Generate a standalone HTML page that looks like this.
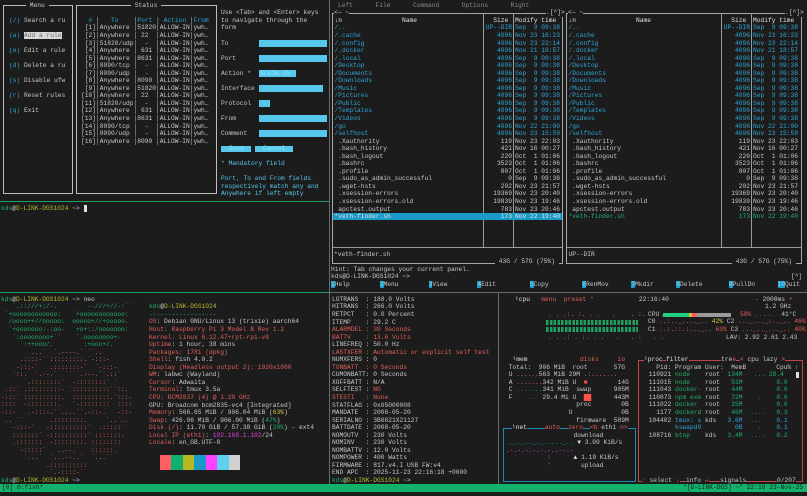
<!DOCTYPE html>
<html><head><meta charset="utf-8"><style>
html,body{margin:0;padding:0;background:#1c1c1c;width:807px;height:496px;overflow:hidden;position:relative}
pre,.a{position:absolute;margin:0;font:6.25px/7.54px "Liberation Mono","DejaVu Sans Mono",monospace;color:#c8c8c8;white-space:pre}
.c{color:#2fa6d6}.cy{color:#55c8ec}.g{color:#22b06a}.y{color:#b8b830}.r{color:#e0605a}.m{color:#e040e0}.w{color:#e0e0e0}.t{color:#1a8ab0}.gy{color:#8a8a8a}.yl{color:#d8c840}
.box{position:absolute;border:1px solid #bdbdbd}
.ln{position:absolute;background:#9a9a9a}
.in{position:absolute;background:#55c8ec;height:6.5px}
.bg{background:#1c1c1c}
</style></head><body>

<!-- Pane A: ufw -->
<div class="box" style="left:3px;top:5px;width:68px;height:187px"></div>
<div class="box" style="left:76px;top:5px;width:139px;height:187px"></div>
<pre class="bg" style="left:26px;top:1.8px"> Menu </pre>
<pre class="bg" style="left:131px;top:1.8px"> Status </pre>
<pre style="left:9px;top:16.88px"><span class="c">(/)</span> Search a ru

<span class="c">(a)</span> <span style="background:#d8d8d8;color:#707070">Add a rule</span>

<span class="c">(e)</span> Edit a rule

<span class="c">(d)</span> Delete a ru

<span class="c">(s)</span> Disable ufw

<span class="c">(r)</span> Reset rules

<span class="c">(q)</span> Exit</pre>
<pre style="left:81px;top:16.88px">  <span class="c">#</span> │   <span class="c">To</span>    │<span class="c">Port</span> │ <span class="c">Action</span> │<span class="c">From</span>
 [1]│Anywhere │51820│ALLOW-IN│ywh…
 [2]│Anywhere │ 22  │ALLOW-IN│ywh…
 [3]│51820/udp│  -  │ALLOW-IN│ywh…
 [4]│Anywhere │ 631 │ALLOW-IN│ywh…
 [5]│Anywhere │8631 │ALLOW-IN│ywh…
 [6]│8090/tcp │  -  │ALLOW-IN│ywh…
 [7]│8090/udp │  -  │ALLOW-IN│ywh…
 [8]│Anywhere │8090 │ALLOW-IN│ywh…
 [9]│Anywhere │51820│ALLOW-IN│ywh…
[10]│Anywhere │ 22  │ALLOW-IN│ywh…
[11]│51820/udp│  -  │ALLOW-IN│ywh…
[12]│Anywhere │ 631 │ALLOW-IN│ywh…
[13]│Anywhere │8631 │ALLOW-IN│ywh…
[14]│8090/tcp │  -  │ALLOW-IN│ywh…
[15]│8090/udp │  -  │ALLOW-IN│ywh…
[16]│Anywhere │8090 │ALLOW-IN│ywh…</pre>
<pre style="left:221px;top:9.34px">Use &lt;Tab&gt; and &lt;Enter&gt; keys
to navigate through the
form

To

Port

Action *

Interface

Protocol

From

Comment



<span class="cy">* Mandatory field</span>

<span class="cy">Port, To and From fields
respectively match any and
Anywhere if left empty</span></pre>
<div class="in" style="left:259px;top:40px;width:68px"></div>
<div class="in" style="left:259px;top:55px;width:68px"></div>
<div class="in" style="left:259px;top:70px;width:37px"></div>
<pre style="left:260px;top:69.66px;color:#90e4fa">ALLOW IN</pre>
<div class="in" style="left:259px;top:85px;width:64px"></div>
<div class="in" style="left:259px;top:100px;width:11px"></div>
<div class="in" style="left:259px;top:115px;width:68px"></div>
<div class="in" style="left:259px;top:130px;width:68px"></div>
<div class="in" style="left:221px;top:145.5px;width:30px"></div>
<div class="in" style="left:255px;top:145.5px;width:38px"></div>
<pre style="left:229px;top:145.06px;color:#90e4fa">Save</pre>
<pre style="left:263px;top:145.06px;color:#90e4fa">Cancel</pre>

<div style="position:absolute;left:0;top:201px;width:329px;height:1px;background:#20a060"></div>
<pre style="left:1px;top:205.38px"><span class="g">kds</span>@<span class="y">D-LINK-DGS1024</span> ~&gt; <span style="background:#e0e0e0"> </span></pre>

<!-- tmux separators -->
<div style="position:absolute;left:329px;top:0;width:1px;height:484px;background:#6a6a6a"></div>
<div style="position:absolute;left:0;top:292px;width:329px;height:1px;background:#20a060"></div>
<div style="position:absolute;left:330px;top:292px;width:477px;height:1px;background:#6a6a6a"></div>
<div style="position:absolute;left:498px;top:292px;width:1px;height:192px;background:#6a6a6a"></div>

<!-- Pane B: mc -->
<pre class="gy" style="left:338px;top:1.8px">Left      File      Command      Options      Right</pre>
<div class="box" style="left:332px;top:12.5px;width:229px;height:249px;border-color:#a8a8a8"></div>
<div class="box" style="left:566px;top:12.5px;width:234px;height:249px;border-color:#a8a8a8"></div>
<div class="ln" style="left:483px;top:13px;width:1px;height:234px"></div>
<div class="ln" style="left:513px;top:13px;width:1px;height:234px"></div>
<div class="ln" style="left:721px;top:13px;width:1px;height:234px"></div>
<div class="ln" style="left:751px;top:13px;width:1px;height:234px"></div>
<div class="ln" style="left:333px;top:246.5px;width:229px;height:1px"></div>
<div class="ln" style="left:567px;top:246.5px;width:234px;height:1px"></div>
<pre class="bg" style="left:334px;top:9.34px">&lt;─ ~</pre>
<pre class="bg" style="left:546px;top:9.34px">.[^]&gt;</pre>
<pre class="bg" style="left:568px;top:9.34px">&lt;─ ~</pre>
<pre class="bg" style="left:785px;top:9.34px">.[^]&gt;</pre>
<div style="position:absolute;left:333px;top:212.92px;width:229px;height:7.54px;background:#1a9ac8"></div>

<pre style="left:334.5px;top:16.88px"><span class="w">↓n                Name</span>
<span class="c">/..
/.cache
/.config
/.docker
/.local
/Desktop
/Documents
/Downloads
/Music
/Pictures
/Public
/Templates
/Videos
/go
/selfhost</span>
 .Xauthority
 .bash_history
 .bash_logout
 .bashrc
 .profile
 .sudo_as_admin_successful
 .wget-hsts
 .xsession-errors
 .xsession-errors.old
 apctest.output
<span class="w">*veth-finder.sh</span></pre>
<pre style="left:484px;width:28px;text-align:right;top:16.88px"><span class="w">Size </span>
<span class="c">UP--DIR
4096
4096
4096
4096
4096
4096
4096
4096
4096
4096
4096
4096
4096
4096</span>
119
421
220
3523
807
0
202
19369
19839
783
<span class="w">173</span></pre>
<pre style="left:515px;top:16.88px"><span class="w">Modify time</span>
<span class="c">Sep  9 09:38
Nov 23 16:23
Nov 23 22:14
Nov 21 18:57
Sep  9 09:38
Sep  9 09:38
Sep  9 09:38
Sep  9 09:38
Sep  9 09:38
Sep  9 09:38
Sep  9 09:38
Sep  9 09:38
Sep  9 09:38
Nov 22 21:00
Nov 23 15:59</span>
Nov 23 22:03
Nov 16 00:27
Oct  1 01:06
Oct  1 01:06
Oct  1 01:06
Sep  9 09:38
Nov 23 21:57
Nov 23 20:40
Nov 23 19:46
Nov 23 20:46
<span class="w">Nov 22 19:40</span></pre>

<pre style="left:568.5px;top:16.88px"><span class="w">↓n                Name</span>
<span class="c">/..
/.cache
/.config
/.docker
/.local
/Desktop
/Documents
/Downloads
/Music
/Pictures
/Public
/Templates
/Videos
/go
/selfhost</span>
 .Xauthority
 .bash_history
 .bash_logout
 .bashrc
 .profile
 .sudo_as_admin_successful
 .wget-hsts
 .xsession-errors
 .xsession-errors.old
 apctest.output
<span class="g">*veth-finder.sh</span></pre>
<pre style="left:722px;width:28px;text-align:right;top:16.88px"><span class="w">Size </span>
<span class="c">UP--DIR
4096
4096
4096
4096
4096
4096
4096
4096
4096
4096
4096
4096
4096
4096</span>
119
421
220
3523
807
0
202
19369
19839
783
<span class="g">173</span></pre>
<pre style="left:753px;top:16.88px"><span class="w">Modify time</span>
<span class="c">Sep  9 09:38
Nov 23 16:23
Nov 23 22:14
Nov 21 18:57
Sep  9 09:38
Sep  9 09:38
Sep  9 09:38
Sep  9 09:38
Sep  9 09:38
Sep  9 09:38
Sep  9 09:38
Sep  9 09:38
Sep  9 09:38
Nov 22 21:00
Nov 23 15:59</span>
Nov 23 22:03
Nov 16 00:27
Oct  1 01:06
Oct  1 01:06
Oct  1 01:06
Sep  9 09:38
Nov 23 21:57
Nov 23 20:40
Nov 23 19:46
Nov 23 20:46
<span class="g">Nov 22 19:40</span></pre>
<pre style="left:334px;top:250.62px">*veth-finder.sh</pre>
<pre style="left:568.5px;top:250.62px">UP--DIR</pre>
<pre class="bg" style="left:495px;top:258.16px"> 43G / 57G (75%) </pre>
<pre class="bg" style="left:732px;top:258.16px"> 43G / 57G (75%) </pre>
<pre style="left:331px;top:265.7px">Hint: Tab changes your current panel.
kds@D-LINK-DGS1024 ~&gt;</pre>
<pre style="left:791px;top:273.24px">[^]</pre>
<pre style="left:331px;top:280.78px"><span style="background:#1a9ac8;color:#9ad8f0">1</span>Help        <span style="background:#1a9ac8;color:#9ad8f0">2</span>Menu        <span style="background:#1a9ac8;color:#9ad8f0">3</span>View        <span style="background:#1a9ac8;color:#9ad8f0">4</span>Edit         <span style="background:#1a9ac8;color:#9ad8f0">5</span>Copy         <span style="background:#1a9ac8;color:#9ad8f0">6</span>RenMov      <span style="background:#1a9ac8;color:#9ad8f0">7</span>Mkdir      <span style="background:#1a9ac8;color:#9ad8f0">8</span>Delete       <span style="background:#1a9ac8;color:#9ad8f0">9</span>PullDn      <span style="background:#1a9ac8;color:#9ad8f0">10</span>Quit</pre>

<!-- Pane C: neofetch -->
<pre style="left:1px;top:295.86px"><span class="g">kds</span>@<span class="y">D-LINK-DGS1024</span> ~&gt; neo</pre>
<pre class="g" style="left:1px;top:303.4px">   `.::///+:/-.        --///+//-:``
 `+oooooooooooo:   `+oooooooooooo:
  /oooo++//ooooo:  ooooo+//+ooooo.
  `+ooooooo:-:oo-   +o+::/ooooooo:
   `:oooooooo+``    `.oooooooo+-
     `:++ooo/.        :+ooo+/.`</pre>
<pre class="r" style="left:1px;top:348.64px">        ...`  `.----.` ``..
     .::::-``:::::::::.`-:::-
    -:::-`   .:::::::-`  `-:::-
   `::.  `.--.`  `` `.---.``.::`
       .::::::::`  -::::::::` `
 .::` .:::::::::- `::::::::::``::.
-:::` ::::::::::.  ::::::::::.`:::-
::::  -::::::::.   `-::::::::  ::::
-::-   .-:::-.``....``.-::-.   -::-
 .. ``       .::::::::.     `..`..
   -:::-`   -::::::::::`  .:::::`
   :::::::` -::::::::::` :::::::.
   .:::::::  -::::::::. ::::::::
    `-:::::`   ..--.`   ::::::.
      `...`  `...--..`  `...`
            .::::::::::
             `.-::::-`</pre>
<pre style="left:149px;top:303.4px"><span class="g">kds</span>@<span class="y">D-LINK-DGS1024</span>
<span class="g">------------------</span>
<span class="r">OS</span>: Debian GNU/Linux 13 (trixie) aarch64
<span class="r">Host: Raspberry Pi 3 Model B Rev 1.2</span>
<span class="r">Kernel: Linux 6.12.47+rpt-rpi-v8</span>
<span class="r">Uptime</span>: 1 hour, 38 mins
<span class="r">Packages: 1781 (dpkg)</span>
<span class="r">Shell</span>: fish 4.0.2
<span class="r">Display (Headless output 2): 1920x1080</span>
<span class="r">WM</span>: labwc (Wayland)
<span class="r">Cursor</span>: Adwaita
<span class="r">Terminal</span>: tmux 3.5a
<span class="r">CPU: BCM2837 (4) @ 1.20 GHz</span>
GPU: Broadcom bcm2835-vc4 [Integrated]
<span class="r">Memory</span>: 566.65 MiB / 906.04 MiB (<span class="yl">63%</span>)
<span class="r">Swap</span>: 426.06 MiB / 906.00 MiB (<span class="g">47%</span>)
<span class="r">Disk (/)</span>: 11.70 GiB / 57.38 GiB (<span class="g">20%</span>) - ext4
<span class="r">Local IP (eth1)</span>: <span class="m">192.168.1.102</span>/24
<span class="r">Locale</span>: en_GB.UTF-8</pre>
<div style="position:absolute;left:160px;top:455px;height:15px;width:80px;display:flex">
<div style="flex:1;background:#ff5f5f"></div><div style="flex:1;background:#10b070"></div><div style="flex:1;background:#b8b820"></div><div style="flex:1;background:#1a9ac8"></div><div style="flex:1;background:#ff40ff"></div><div style="flex:1;background:#5fd0f0"></div><div style="flex:1;background:#d0d0d0"></div></div>
<pre style="left:1px;top:476.82px"><span class="g">kds</span>@<span class="y">D-LINK-DGS1024</span> ~&gt;</pre>

<!-- Pane D: apcupsd -->
<pre style="left:332px;top:295.86px">LOTRANS  : 188.0 Volts
HITRANS  : 266.0 Volts
RETPCT   : 0.0 Percent
ITEMP    : 29.2 C
<span class="r">ALARMDEL : 30 Seconds
BATTV    : 13.6 Volts</span>
LINEFREQ : 50.0 Hz
<span class="r">LASTXFER : Automatic or explicit self test</span>
NUMXFERS : 0
<span class="r">TONBATT  : 0 Seconds</span>
CUMONBATT: 0 Seconds
XOFFBATT : N/A
SELFTEST : <span class="r">NO</span>
<span class="r">STESTI   : None</span>
STATFLAG : 0x05000008
MANDATE  : 2008-05-20
SERIALNO : 3B0821X21127
BATTDATE : 2008-05-20
NOMOUTV  : 230 Volts
NOMINV   : 230 Volts
NOMBATTV : 12.0 Volts
NOMPOWER : 400 Watts
FIRMWARE : 817.v4.I USB FW:v4
END APC  : 2025-11-23 22:16:18 +0000
<span class="g">kds</span>@<span class="y">D-LINK-DGS1024</span> ~&gt;</pre>

<!-- Pane E: btop -->
<pre style="left:515px;top:295.86px"><span class="w">¹cpu</span>   <span class="r">menu</span>  <span class="r">preset *</span>            22:16:40</pre>
<pre style="left:755px;top:295.86px"><span class="r">-</span> 2000ms <span class="r">+</span></pre>
<pre style="left:765px;top:303.4px">1.2 GHz</pre>
<pre class="r" style="left:548px;top:310.94px">. . .:. :. . .   .    . :.  . .</pre>
<div style="position:absolute;left:546px;top:320px;width:92px;height:12px;background:repeating-linear-gradient(90deg,#1ea060 0 2.5px,transparent 2.5px 3.75px);-webkit-mask:linear-gradient(#000 0 5px,transparent 5px 7px,#000 7px)"></div>
<pre class="r" style="left:548px;top:333.56px">. . .: . :. . .   .   . :   . .</pre>
<pre style="left:648px;top:310.94px">CPU</pre>
<div style="position:absolute;left:663px;top:313px;width:68px;height:4px;background:linear-gradient(90deg,#20d080 0 26px,#d8c030 26px 29px,#f06060 29px 34px,#9a9a9a 34px)"></div>
<pre style="left:740px;top:310.94px"><span class="r">50%</span> <span class="t">.....</span>  41°C</pre>
<pre style="left:648px;top:318.48px">C0 <span class="r">..:.._...._..</span> <span class="yl">42%</span> C2 <span class="r">..._..._:.._..</span> <span class="r">46%</span>
C1 <span class="r">..:.::.:..._..</span> <span class="r">63%</span> C3 <span class="r">..._.._..._..</span> <span class="r">40%</span></pre>
<pre style="left:726px;top:333.56px">LAV: 2.92 2.61 2.43</pre>

<pre style="left:501.25px;top:356.18px">   <span class="w">¹mem</span>              <span class="r">disks</span>     <span class="r">io</span>
  Total:  906 MiB  root       57G
  U <span class="r">......</span>563 MiB 29M <span class="r">.:.......</span>
  A <span class="r">.......</span>342 MiB U  <span style="color:#ff5050">■</span>        14G
  C <span class="t">.......</span>341 MiB  swap      905M
  F    <span class="t">..</span>  29.4 Mi U  <span style="color:#ff5050">██</span>      443M
                    proc        0B
                  U             0B
                    firmware  589M</pre>

<div class="box" style="left:503px;top:427.5px;width:131px;height:52px;border-color:#1a8ab0"></div>
<pre class="bg" style="left:512px;top:424.04px"><span class="w">¹net</span></pre>
<pre class="bg" style="left:545px;top:424.04px"><span class="r">auto</span></pre>
<pre class="bg" style="left:568px;top:424.04px"><span class="r">zero</span></pre>
<pre class="bg" style="left:590px;top:424.04px"><span class="r">&lt;b</span> eth1 <span class="r">n&gt;</span></pre>
<pre style="left:506px;top:431.58px">                  download
<span class="t">._.._.._._....._..</span> <span class="w">▼</span> 3.09 KiB/s
<span class="m">.-.-.-.-.-.-..--.-</span>
           <span class="m">:</span>      <span class="w">▲</span> 1.19 KiB/s
           <span class="m">'</span>        upload</pre>

<div class="box" style="left:638px;top:359.9px;width:163px;height:120px;border-color:#c04545"></div>
<pre class="bg" style="left:644px;top:356.18px"><span class="w">¹proc</span></pre>
<pre class="bg" style="left:666px;top:356.18px"><span class="w">filter</span></pre>
<pre class="bg" style="left:721px;top:356.18px">tre<span class="r">e</span></pre>
<pre class="bg" style="left:740px;top:356.18px"><span class="r">&lt;</span> cpu lazy <span class="r">&gt;</span></pre>
<pre style="left:641.25px;top:363.72px">    Pid: Program User:  MemB        Cpu% ↑
  110921 <span class="g">node</span>    root  <span class="g">134M</span>   <span class="t">...</span> <span class="g">28.4</span>
  111015 <span class="g">node</span>    root   <span class="g">51M</span>         <span class="g">0.0</span>
  111043 <span class="g">docker-</span> root   <span class="g">44M</span>         <span class="g">0.0</span>
  110873 <span class="g">npm exe</span> root   <span class="g">72M</span>    <span class="t">.</span>    <span class="g">0.0</span>
  111022 <span class="g">docker</span>  root   <span class="g">25M</span>         <span class="g">0.0</span>
    1177 <span class="g">dockerd</span> root   <span class="g">46M</span>  <span class="t">....</span>   <span class="g">0.3</span>
  104402 <span class="c">tmux: s</span> kds   <span class="c">3.6M</span>  <span class="t">...</span>    <span class="c">0.1</span>
         <span class="c">kswapd0</span>         <span class="c">0B</span>    <span class="t">.</span>    <span class="c">0.1</span>
  108716 <span class="g">btop</span>    kds   <span class="g">3.4M</span>  <span class="t">....</span>   <span class="g">0.2</span></pre>
<div style="position:absolute;left:796px;top:372px;width:3px;height:6px;background:#e0e0e0"></div>
<pre class="bg" style="left:642px;top:476.82px"><span class="r">↑</span> select <span class="r">↓</span></pre>
<pre class="bg" style="left:686px;top:476.82px">info <span class="r">↵</span></pre>
<pre class="bg" style="left:720px;top:476.82px">signals</pre>
<pre class="bg" style="left:777px;top:476.82px">0/207</pre>

<!-- status bar -->
<div style="position:absolute;left:0;top:484.4px;width:807px;height:8px;background:#12b26c"></div>
<pre style="left:2px;top:484.36px;color:#1c1c1c">[0] 0:fish*</pre>
<pre style="left:683px;top:484.36px;color:#1c1c1c">"[D-LINK-DGS] ~" 22:16 23-Nov-25</pre>
</body></html>
